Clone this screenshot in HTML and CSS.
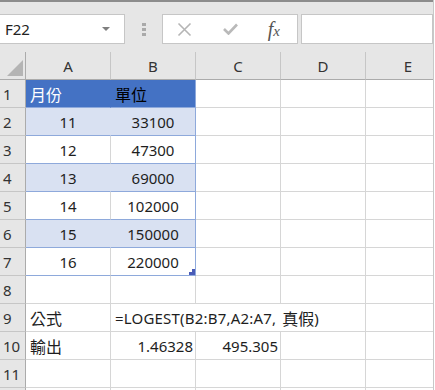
FILE: index.html
```html
<!DOCTYPE html>
<html>
<head>
<meta charset="utf-8">
<link rel="stylesheet" href="styles.css">
</head>
<body>
<div class="app">
  <div class="toolbar">
    <div class="namebox"><span class="nb-text">F22</span><span class="caret"></span></div>
    <div class="grip"><i></i><i></i><i></i></div>
    <div class="fbtns">
      <svg class="ic-x" width="15" height="15" viewBox="0 0 15 15"><path d="M1.5 1.5 L13.5 13.5 M13.5 1.5 L1.5 13.5" stroke="#b5b5b5" stroke-width="1.6" fill="none"/></svg>
      <svg class="ic-ok" width="15" height="12" viewBox="0 0 15 12"><path d="M1 6 L5.5 10.5 L14 1.5" stroke="#b9b9b9" stroke-width="2.6" fill="none"/></svg>
      <span class="fx"><i class="fx-f">f</i><i class="fx-x">x</i></span>
    </div>
    <div class="finput"></div>
  </div>
  <div class="sheet">
    <div class="c corner"><span class="tri"></span></div>
    <div class="c ch">A</div><div class="c ch">B</div><div class="c ch">C</div><div class="c ch">D</div><div class="c ch">E</div>

    <div class="c rh">1</div>
    <div class="c th tha"><span class="cjk">月份</span></div>
    <div class="c th thb"><span class="cjk">單位</span></div>
    <div class="c"></div><div class="c"></div><div class="c"></div>

    <div class="c rh">2</div>
    <div class="c ta band ctr">11</div>
    <div class="c tb band ctr">33100</div>
    <div class="c"></div><div class="c"></div><div class="c"></div>

    <div class="c rh">3</div>
    <div class="c ta ctr">12</div>
    <div class="c tb ctr">47300</div>
    <div class="c"></div><div class="c"></div><div class="c"></div>

    <div class="c rh">4</div>
    <div class="c ta band ctr">13</div>
    <div class="c tb band ctr">69000</div>
    <div class="c"></div><div class="c"></div><div class="c"></div>

    <div class="c rh">5</div>
    <div class="c ta ctr">14</div>
    <div class="c tb ctr">102000</div>
    <div class="c"></div><div class="c"></div><div class="c"></div>

    <div class="c rh">6</div>
    <div class="c ta band ctr">15</div>
    <div class="c tb band ctr">150000</div>
    <div class="c"></div><div class="c"></div><div class="c"></div>

    <div class="c rh">7</div>
    <div class="c ta ctr">16</div>
    <div class="c tb ctr last">220000<span class="handle"><i class="h1"></i><i class="h2"></i></span></div>
    <div class="c"></div><div class="c"></div><div class="c"></div>

    <div class="c rh">8</div>
    <div class="c"></div><div class="c"></div><div class="c"></div><div class="c"></div><div class="c"></div>

    <div class="c rh">9</div>
    <div class="c"><span class="cjk">公式</span></div>
    <div class="c span3 formula">=LOGEST(B2:B7,A2:A7,<span class="cjk gap">真假</span>)</div>
    <div class="c"></div>

    <div class="c rh">10</div>
    <div class="c"><span class="cjk">輸出</span></div>
    <div class="c rt">1.46328</div>
    <div class="c rt">495.305</div>
    <div class="c"></div><div class="c"></div>

    <div class="c rh">11</div>
    <div class="c"></div><div class="c"></div><div class="c"></div><div class="c"></div><div class="c"></div>

    <div class="c rh"></div>
    <div class="c"></div><div class="c"></div><div class="c"></div><div class="c"></div><div class="c"></div>
  </div>
</div>
</body>
</html>
```
FILE: styles.css
```css
html, body {
  margin: 0;
  padding: 0;
  background: #ffffff;
}
body {
  font-family: "Noto Sans", "Noto Sans CJK TC", sans-serif;
  font-size: 15px;
  color: #1e1e1e;
  overflow: hidden;
}
.app {
  width: 434px;
  height: 390px;
  overflow: hidden;
  border-right: 1px solid #c8c8c8;
  box-sizing: border-box;
  background: #e6e6e6;
}
.toolbar {
  display: flex;
  align-items: center;
  border-top: 2px solid #8c8c8c;
  padding: 12px 0 8px 0;
  height: 52px;
  box-sizing: border-box;
  background: #e6e6e6;
}
.namebox {
  display: flex;
  align-items: center;
  width: 125px;
  height: 30px;
  box-sizing: border-box;
  background: #fff;
  border: 1px solid #c6c6c6;
  border-left: none;
}
.nb-text {
  padding-left: 5px;
  font-size: 15px;
  color: #222;
}
.caret {
  margin-left: auto;
  margin-right: 14px;
  width: 0;
  height: 0;
  border-left: 4px solid transparent;
  border-right: 4px solid transparent;
  border-top: 4px solid #7f7f7f;
}
.grip {
  display: flex;
  flex-direction: column;
  gap: 2px;
  margin-left: 17px;
  width: 4px;
}
.grip i {
  display: block;
  width: 4px;
  height: 3px;
  background: #a9a9a9;
}
.fbtns {
  display: flex;
  align-items: center;
  margin-left: 16px;
  width: 137px;
  height: 30px;
  box-sizing: border-box;
  background: #fff;
  border: 1px solid #c6c6c6;
}
.ic-x {
  margin-left: 14px;
  flex: none;
}
.ic-ok {
  margin-left: 31px;
  flex: none;
}
.fx {
  margin-left: 30px;
  font-family: "Liberation Serif", "DejaVu Serif", serif;
  color: #555555;
  line-height: 1;
}
.fx-f {
  font-size: 20px;
}
.fx-x {
  font-size: 15px;
}
.finput {
  margin-left: 3px;
  width: 132px;
  height: 30px;
  box-sizing: border-box;
  background: #fff;
  border: 1px solid #c6c6c6;
}
.sheet {
  display: grid;
  grid-template-columns: 26px repeat(5, 85px);
  grid-auto-rows: 28px;
  background: #fff;
}
.c {
  display: flex;
  align-items: center;
  box-sizing: border-box;
  border-right: 1px solid #d6d6d6;
  border-bottom: 1px solid #d6d6d6;
  padding: 1px 4px 0 4px;
  white-space: nowrap;
  position: relative;
}
.cjk {
  font-family: "Noto Sans CJK TC", "Noto Sans", sans-serif;
  font-size: 16px;
}
.formula {
  letter-spacing: 0.2px;
}
.gap {
  margin-left: 6px;
  letter-spacing: 0;
}
.corner {
  background: #e6e6e6;
  border-right: 1px solid #ababab;
  border-bottom: 1px solid #ababab;
  padding: 0;
}
.tri {
  position: absolute;
  left: 7px;
  top: 8px;
  width: 0;
  height: 0;
  border-left: 16px solid transparent;
  border-bottom: 16px solid #b4b4b4;
}
.ch {
  background: #e6e6e6;
  justify-content: center;
  border-right: 1px solid #c6c6c6;
  border-bottom: 1px solid #ababab;
  color: #333;
}
.rh {
  background: #e6e6e6;
  border-right: 1px solid #ababab;
  border-bottom: 1px solid #c6c6c6;
  padding-left: 3px;
  color: #333;
}
.th {
  background: #4472c4;
  border-bottom-color: #8ea9db;
}
.tha {
  color: #fff;
  border-right-color: #4472c4;
}
.thb {
  color: #000;
  border-right-color: #8ea9db;
}
.ta {
  border-bottom-color: #8ea9db;
}
.tb {
  border-bottom-color: #8ea9db;
  border-right-color: #8ea9db;
}
.band {
  background: #d9e1f2;
}
.ta.band {
  border-right-color: #d9e1f2;
}
.ctr {
  justify-content: center;
}
.rt {
  justify-content: flex-end;
  padding-right: 2px;
}
.span3 {
  grid-column: span 3;
}
.handle {
  position: absolute;
  right: 0;
  bottom: 0;
  width: 6px;
  height: 6px;
}
.handle i {
  position: absolute;
  display: block;
  background: #4a5cb8;
}
.h1 {
  right: 0;
  top: 0;
  width: 3px;
  height: 6px;
}
.h2 {
  left: 0;
  bottom: 0;
  width: 6px;
  height: 3px;
}
```
